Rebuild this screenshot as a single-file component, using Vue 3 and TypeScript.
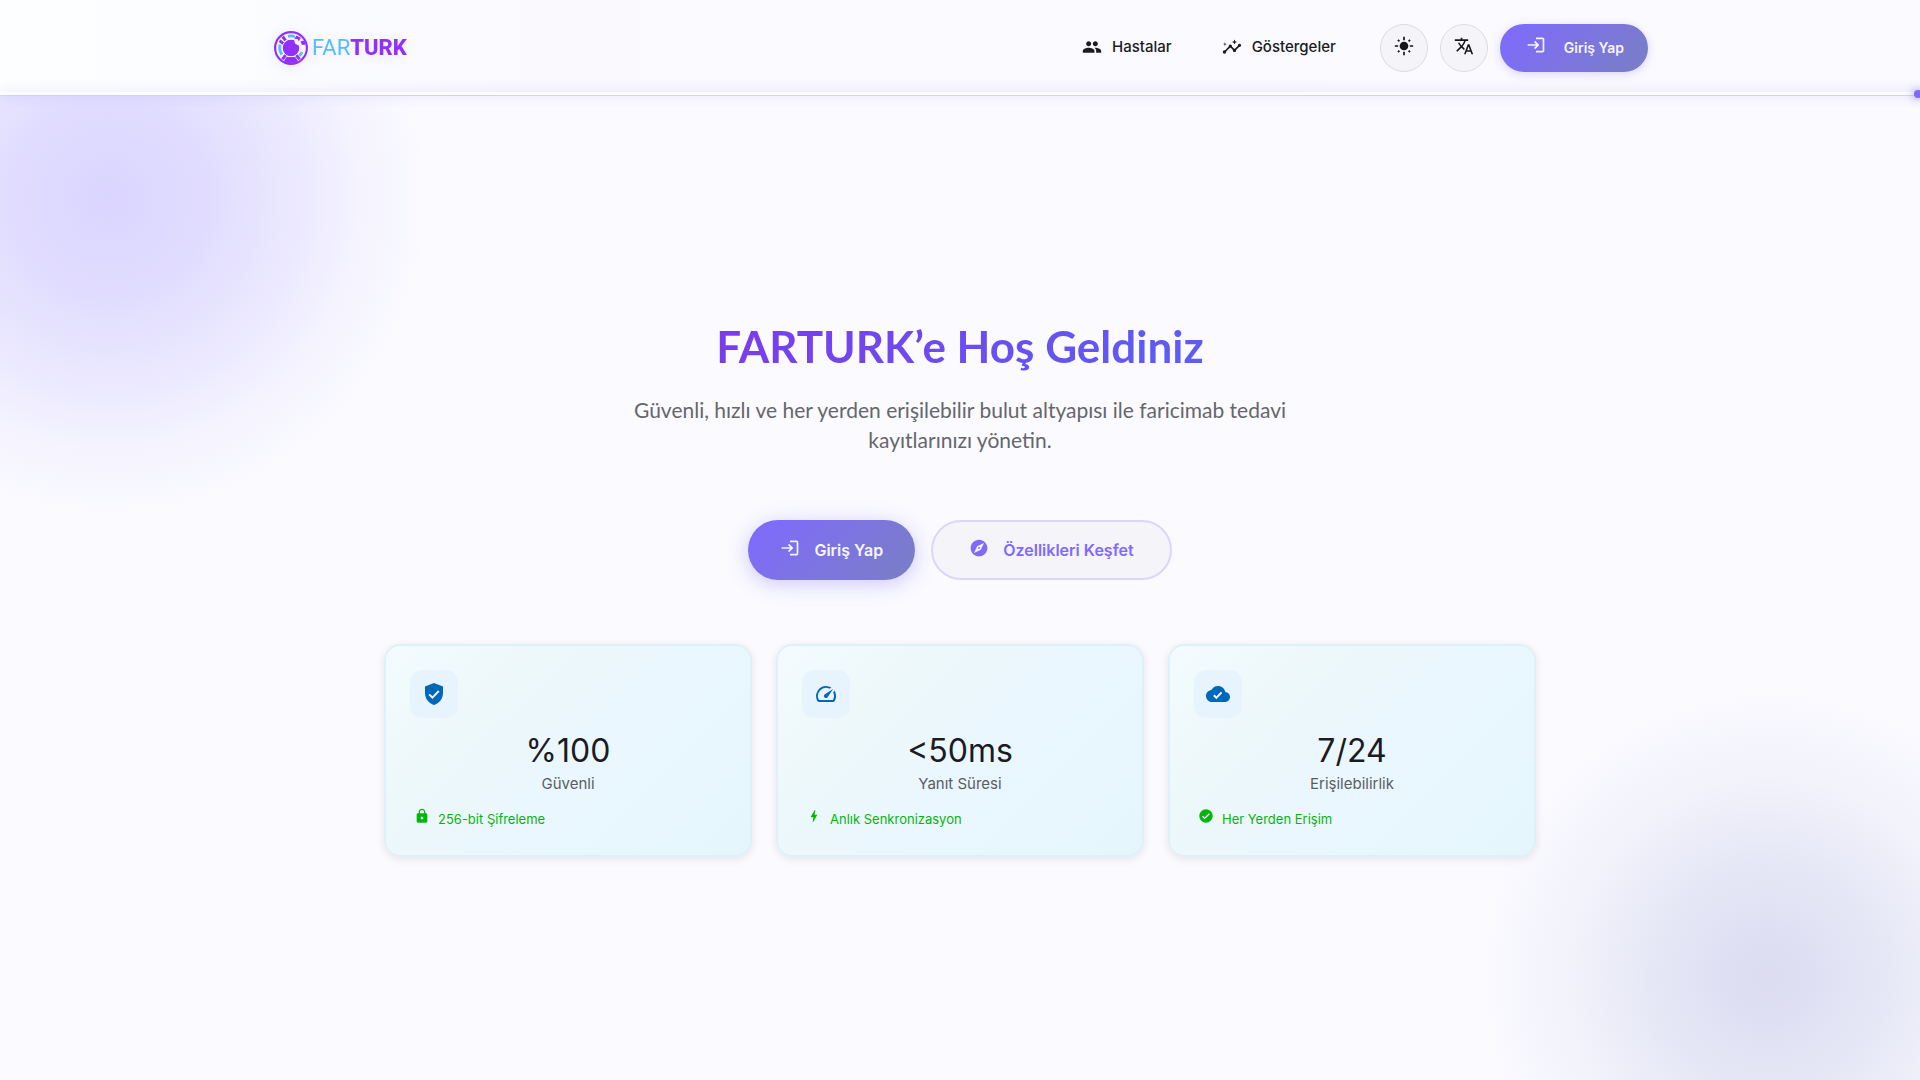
<script setup lang="ts">
interface Icon {
  fill: string
  check?: string
}

interface Stat {
  icon: Icon
  value: string
  label: string
  noteIcon: Icon
  note: string
}

const loginPath =
  'M11 7L9.6 8.4l2.6 2.6H2v2h10.2l-2.6 2.6L11 17l5-5-5-5zm9 12h-8v2h8c1.1 0 2-.9 2-2V5c0-1.1-.9-2-2-2h-8v2h8v14z'

const navLinks = [
  {
    label: 'Hastalar',
    path: 'M16 11c1.66 0 2.99-1.34 2.99-3S17.66 5 16 5c-1.66 0-3 1.34-3 3s1.34 3 3 3zm-8 0c1.66 0 2.99-1.34 2.99-3S9.66 5 8 5C6.34 5 5 6.34 5 8s1.34 3 3 3zm0 2c-2.33 0-7 1.17-7 3.5V19h14v-2.5c0-2.33-4.67-3.5-7-3.5zm8 0c-.29 0-.62.02-.97.05 1.16.84 1.97 1.97 1.97 3.45V19h6v-2.5c0-2.33-4.67-3.5-7-3.5z',
  },
  {
    label: 'Göstergeler',
    path: 'M21 8c-1.45 0-2.26 1.44-1.93 2.51l-3.55 3.56c-.3-.09-.74-.09-1.04 0l-2.55-2.55C12.27 10.45 11.46 9 10 9c-1.45 0-2.27 1.44-1.93 2.52l-4.56 4.55C2.44 15.74 1 16.55 1 18c0 1.1.9 2 2 2 1.45 0 2.26-1.44 1.93-2.51l4.55-4.56c.3.09.74.09 1.04 0l2.55 2.55C12.73 16.55 13.54 18 15 18c1.45 0 2.27-1.44 1.93-2.52l3.56-3.55C21.56 12.26 23 11.45 23 10c0-1.1-.9-2-2-2zM15 9l.94-2.07L18 6l-2.06-.93L15 3l-.92 2.07L12 6l2.08.93zM3.5 11L4 9l2-.5L4 8l-.5-2L3 8l-2 .5L3 9z',
  },
]

const stats: Stat[] = [
  {
    icon: {
      fill: 'M12 1L3 4.6v6.4c0 5.55 3.84 10.74 9 12 5.16-1.26 9-6.45 9-12V4.6L12 1z',
      check: 'M7.2 12.4l3.2 3.2 6.4-6.6',
    },
    value: '%100',
    label: 'Güvenli',
    noteIcon: {
      fill: 'M18 8h-1V6c0-2.76-2.24-5-5-5S7 3.24 7 6v2H6c-1.1 0-2 .9-2 2v10c0 1.1.9 2 2 2h12c1.1 0 2-.9 2-2V10c0-1.1-.9-2-2-2zm-6 9c-1.1 0-2-.9-2-2s.9-2 2-2 2 .9 2 2-.9 2-2 2zm3.1-9H8.9V6c0-1.71 1.39-3.1 3.1-3.1 1.71 0 3.1 1.39 3.1 3.1v2z',
    },
    note: '256-bit Şifreleme',
  },
  {
    icon: {
      fill: 'M20.38 8.57l-1.23 1.85a8 8 0 0 1-.22 7.58H5.07A8 8 0 0 1 15.58 6.85l1.85-1.23A10 10 0 0 0 3.35 19a2 2 0 0 0 1.72 1h13.85a2 2 0 0 0 1.74-1 10 10 0 0 0-.27-10.44zm-9.79 6.84a2 2 0 0 0 2.83 0l5.66-8.49-8.49 5.66a2 2 0 0 0 0 2.83z',
    },
    value: '<50ms',
    label: 'Yanıt Süresi',
    noteIcon: {
      fill: 'M11 21h-1l1-7H7.5c-.58 0-.57-.32-.38-.66C8.48 10.94 10.42 7.54 13 3h1l-1 7h3.5c.49 0 .56.33.47.51l-.07.15C12.96 17.55 11 21 11 21z',
    },
    note: 'Anlık Senkronizasyon',
  },
  {
    icon: {
      fill: 'M19.35 10.04C18.67 6.59 15.64 4 12 4 9.11 4 6.6 5.64 5.35 8.04 2.34 8.36 0 10.91 0 14c0 3.31 2.69 6 6 6h13c2.76 0 5-2.24 5-5 0-2.64-2.05-4.78-4.65-4.96z',
      check: 'M7.8 13.2l2.6 2.6 5.2-5.4',
    },
    value: '7/24',
    label: 'Erişilebilirlik',
    noteIcon: {
      fill: 'M12 2C6.48 2 2 6.48 2 12s4.48 10 10 10 10-4.48 10-10S17.52 2 12 2z',
      check: 'M6.8 12.4l3.2 3.2 7-7',
    },
    note: 'Her Yerden Erişim',
  },
]
</script>

<template>
  <div class="page">
    <header class="header">
      <div class="bar">
        <a class="logo" href="#" aria-label="FARTURK">
          <svg class="emblem" viewBox="0 0 34 34" aria-hidden="true">
            <circle cx="17" cy="17" r="17" fill="#9130fb" />
            <circle cx="17" cy="17" r="11.4" fill="none" stroke="#f7f4ff" stroke-width="6.8" />
            <g fill="none" stroke="#9130fb">
              <path d="M5.6 9.6l3.6 3M8.6 5.6l3 3.8M8.4 28.4l3.2-4.2M25.6 28.4l-3.2-4.2" stroke-width="3" />
              <path d="M24.6 5.6l-2.4 4.4" stroke-width="5" />
              <path d="M10.500 30.200c3.600 2.200 9.400 2.200 13 0l-2.200-3.600h-8.600z" fill="#9130fb" />
            </g>
            <path
              d="M14 5.300a12 12 0 0 1 7 .4M6 13.600a12 12 0 0 0 2 10M28 21a12 12 0 0 1-2.600 3.800"
              fill="none"
              stroke="#56bdfb"
              stroke-width="2.8"
            />
            <circle cx="17" cy="17" r="8.2" fill="#9130fb" />
            <path d="M20 8l1 4.500 3.500 2 4-1.500-3-1.500-2-3.500z" fill="#f7f4ff" />
            <path d="M26.500 10.500l1.500 3.500 4-.5-2-4z" fill="#9130fb" />
          </svg>
          <span class="wordmark"><span class="thin">FAR</span><span class="thick">TURK</span></span>
        </a>

        <nav class="nav">
          <a v-for="link in navLinks" :key="link.label" class="nav-link" href="#">
            <svg class="icon" viewBox="0 0 24 24" aria-hidden="true"><path :d="link.path" /></svg>
            <span>{{ link.label }}</span>
          </a>
        </nav>

        <div class="actions">
          <button class="round" type="button" aria-label="Tema">
            <svg class="icon" viewBox="0 0 24 24" aria-hidden="true">
              <circle cx="12" cy="12" r="5.2" />
              <path
                d="M12 1v4M12 19v4M1 12h4M19 12h4M4.7 4.7l1.8 1.8M17.5 17.5l1.8 1.8M4.7 19.3l1.8-1.8M17.5 6.5l1.8-1.8"
                stroke="currentColor"
                stroke-width="2"
              />
            </svg>
          </button>
          <button class="round" type="button" aria-label="Dil">
            <svg class="icon" viewBox="0 0 24 24" aria-hidden="true">
              <path
                d="M12.87 15.07l-2.54-2.51.03-.03c1.74-1.94 2.98-4.17 3.71-6.53H17V4h-7V2H8v2H1v1.99h11.17C11.5 7.92 10.44 9.75 9 11.35 8.07 10.32 7.3 9.19 6.69 8h-2c.73 1.63 1.73 3.17 2.98 4.56l-5.09 5.02L4 19l5-5 3.11 3.11.76-2.04zM18.5 10h-2L12 22h2l1.12-3h4.75L21 22h2l-4.5-12zm-2.62 7l1.62-4.33L19.12 17h-3.24z"
              />
            </svg>
          </button>
          <button class="login" type="button">
            <svg class="icon" viewBox="0 0 24 24" aria-hidden="true"><path :d="loginPath" /></svg>
            <span>Giriş Yap</span>
          </button>
        </div>
      </div>
      <div class="beam"><span class="spark"></span></div>
    </header>

    <main class="hero">
      <h1 class="title">FARTURK’e Hoş Geldiniz</h1>
      <p class="subtitle">
        Güvenli, hızlı ve her yerden erişilebilir bulut altyapısı ile faricimab tedavi kayıtlarınızı yönetin.
      </p>

      <div class="cta">
        <button class="cta-button primary" type="button">
          <svg class="icon" viewBox="0 0 24 24" aria-hidden="true"><path :d="loginPath" /></svg>
          <span>Giriş Yap</span>
        </button>
        <button class="cta-button secondary" type="button">
          <svg class="icon" viewBox="0 0 24 24" aria-hidden="true">
            <path
              fill-rule="evenodd"
              d="M12 10.9c-.61 0-1.1.49-1.1 1.1s.49 1.1 1.1 1.1c.61 0 1.1-.49 1.1-1.1s-.49-1.1-1.1-1.1zM12 2C6.48 2 2 6.48 2 12s4.48 10 10 10 10-4.48 10-10S17.52 2 12 2zm2.19 12.19L6 18l3.81-8.19L18 6l-3.81 8.19z"
            />
          </svg>
          <span>Özellikleri Keşfet</span>
        </button>
      </div>

      <section class="stats">
        <article v-for="stat in stats" :key="stat.label" class="card">
          <div class="badge">
            <svg class="badge-icon" viewBox="0 0 24 24" aria-hidden="true">
              <path :d="stat.icon.fill" />
              <path v-if="stat.icon.check" class="check" :d="stat.icon.check" />
            </svg>
          </div>
          <div class="value">{{ stat.value }}</div>
          <div class="label">{{ stat.label }}</div>
          <div class="note">
            <svg class="note-icon" viewBox="0 0 24 24" aria-hidden="true">
              <path :d="stat.noteIcon.fill" />
              <path v-if="stat.noteIcon.check" class="check" :d="stat.noteIcon.check" />
            </svg>
            <span>{{ stat.note }}</span>
          </div>
        </article>
      </section>
    </main>
  </div>
</template>

<style>
body {
  margin: 0;
}
</style>

<style scoped>
* {
  box-sizing: border-box;
}

.page {
  display: flex;
  flex-direction: column;
  min-height: 100vh;
  overflow: hidden;
  font-family: Inter, 'Liberation Sans', sans-serif;
  color: #1b1b20;
  background:
    radial-gradient(circle at 109px 198px, #7f69ff42 0, #7f69ff34 100px, #7f69ff1e 190px, #7f69ff0c 250px, #7f69ff00 320px),
    radial-gradient(
      circle at calc(100% - 152px) calc(100% - 103px),
      #7a7fc43c 0,
      #7a7fc438 40px,
      #7a7fc426 120px,
      #7a7fc410 200px,
      #7a7fc400 290px
    ),
    #fafaff;
}

button {
  font: inherit;
  cursor: pointer;
}

a {
  color: inherit;
  text-decoration: none;
}

.icon {
  flex: none;
  width: 20px;
  height: 20px;
  fill: currentColor;
}

.header {
  background: linear-gradient(90deg, #fdfeff 0%, #fcfdff 12%, #f9f9fe 28%, #fafaff 100%);
  border-bottom: 1px solid #dcd6fc;
}

.bar {
  display: flex;
  align-items: center;
  max-width: 1424px;
  height: 92px;
  margin: 0 auto;
  padding: 4px 24px 0;
}

.logo {
  display: flex;
  align-items: center;
  gap: 4px;
  margin-right: auto;
  padding-left: 2px;
  filter: drop-shadow(0 2px 8px #7f69ff26);
}

.emblem {
  width: 34px;
  height: 34px;
}

.wordmark {
  font-family: Roboto, 'Liberation Sans', sans-serif;
  font-size: 22px;
  line-height: 34px;
}

.thin {
  font-weight: 400;
  color: #56bdfb;
}

.thick {
  font-weight: 800;
  color: #9130fb;
}

.nav {
  display: flex;
  gap: 50px;
  margin-right: 44px;
  padding-bottom: 2px;
}

.nav-link {
  display: flex;
  align-items: center;
  gap: 10px;
  font-size: 15px;
  font-weight: 500;
  line-height: 20px;
}

.actions {
  display: flex;
  gap: 12px;
}

.round {
  display: flex;
  align-items: center;
  justify-content: center;
  width: 48px;
  height: 48px;
  padding: 0 0 4px;
  color: #16161a;
  background: #f4f4f9;
  border: 1px solid #dcdce1;
  border-radius: 50%;
}

.login {
  display: flex;
  align-items: center;
  gap: 18px;
  height: 48px;
  padding: 0 24px 2px 26px;
  color: #f6f4ff;
  font-size: 14px;
  font-weight: 600;
  background: linear-gradient(135deg, #7f69ff, #7a7fc4);
  border: 0;
  border-radius: 24px;
  box-shadow: 0 2px 8px #7f69ff40;
}

.login .icon,
.cta-button .icon {
  margin-bottom: 4px;
}

.beam {
  position: relative;
  height: 3px;
  background: #fcfcff;
  box-shadow: 0 0 12px #7f69ff50;
}

.spark {
  position: absolute;
  top: -2px;
  right: -2px;
  width: 8px;
  height: 8px;
  background: #7f69ff;
  border-radius: 50%;
  box-shadow: 0 0 10px #7f69ff;
}

.hero {
  display: flex;
  flex: 1;
  flex-direction: column;
  align-items: center;
  justify-content: center;
  padding: 24px;
}

.title {
  margin: 0 0 22px;
  font-family: Lato, 'Liberation Sans', sans-serif;
  font-size: 44px;
  font-weight: 700;
  line-height: 54px;
  color: transparent;
  background: linear-gradient(135deg, #7c3aed, #5b5ff5);
  background-clip: text;
}

.subtitle {
  max-width: 680px;
  margin: 0 0 65px;
  font-family: Lato, 'Liberation Sans', sans-serif;
  font-size: 21px;
  line-height: 30px;
  text-align: center;
  color: #66666b;
}

.cta {
  display: flex;
  gap: 16px;
  margin-bottom: 64px;
}

.cta-button {
  display: flex;
  align-items: center;
  gap: 14px;
  height: 60px;
  padding: 0 32px;
  font-size: 16px;
  font-weight: 600;
  border: 0;
  border-radius: 30px;
}

.primary {
  color: #f6f4ff;
  background: linear-gradient(135deg, #7f69ff, #7a7fc4);
  box-shadow: 0 4px 20px #7f69ff59;
}

.secondary {
  padding: 0 36px;
  color: #7f69ff;
  background: #f4f4f9;
  border: 2px solid #dcd6fc;
}

.stats {
  display: grid;
  grid-template-columns: repeat(3, 1fr);
  gap: 24px;
  width: 100%;
  max-width: 1152px;
}

.card {
  padding: 24px;
  background: linear-gradient(135deg, #f3fbfe 0%, #edf8fa 30%, #ebf7fe 50%, #e4f6fc 100%);
  border: 2px solid #e0f0f8;
  border-radius: 16px;
  box-shadow: 0 2px 8px #00000018;
}

.badge {
  display: flex;
  align-items: center;
  justify-content: center;
  width: 48px;
  height: 48px;
  background: #e7f4fd;
  border-radius: 12px;
}

.badge-icon {
  width: 24px;
  height: 24px;
  fill: #0068b9;
}

.check {
  fill: none;
  stroke: #edf8fe;
  stroke-width: 2;
}

.value {
  margin-top: 13px;
  font-size: 32px;
  line-height: 40px;
  text-align: center;
}

.label {
  margin-top: 3px;
  font-size: 15px;
  line-height: 20px;
  text-align: center;
  color: #5a5e63;
}

.note {
  display: flex;
  align-items: center;
  gap: 8px;
  margin-top: 13px;
  padding-left: 4px;
  font-size: 13px;
  line-height: 24px;
  color: #06b50c;
}

.note-icon {
  width: 16px;
  height: 16px;
  margin-bottom: 6px;
  fill: currentColor;
}
</style>
